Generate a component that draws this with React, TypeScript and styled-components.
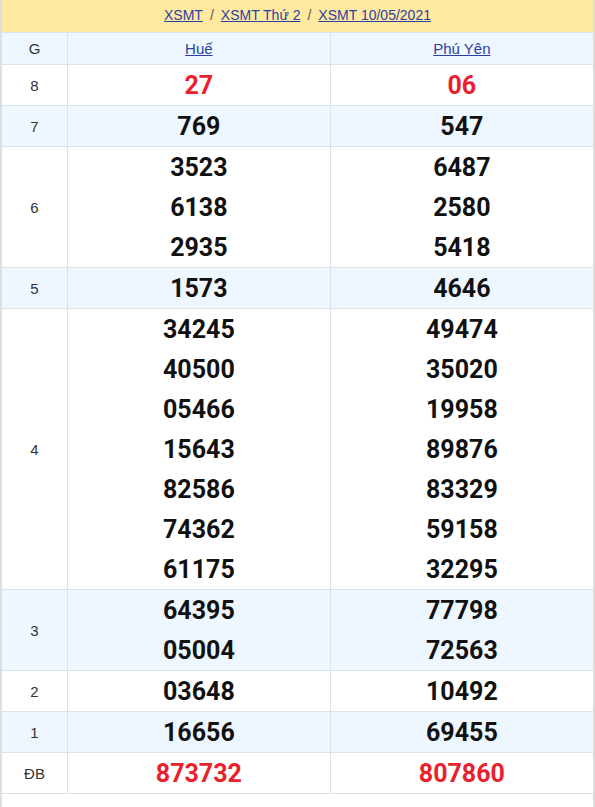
import React from "react";
import styled, { createGlobalStyle } from "styled-components";

const Global = createGlobalStyle`
  html, body { margin: 0; padding: 0; background: #fff; }
  body { font-family: "Liberation Sans", Arial, sans-serif; }
`;

const Wrapper = styled.div`
  width: 595px;
  box-sizing: border-box;
  border-left: 2px solid #dedede;
  border-right: 2px solid #dedede;
  padding-bottom: 14px;
`;

const Crumbs = styled.div`
  height: 32px;
  background: #ffe99f;
  display: flex;
  align-items: center;
  justify-content: center;
  font-size: 14px;
  color: #333;
  padding-bottom: 3px;
  box-sizing: border-box;
`;

const Crumb = styled.a`
  color: #2b3fa5;
  text-decoration: underline;
`;

const Sep = styled.span`
  margin: 0 7px;
  color: #555;
`;

const Table = styled.table`
  width: 100%;
  border-collapse: collapse;
  table-layout: fixed;
  border-bottom: 1px solid #dde2e8;
`;

const Row = styled.tr<{ $alt?: boolean }>`
  background: ${(p) => (p.$alt ? "#eef6ff" : "#ffffff")};
`;

const HeadCell = styled.th<{ $w?: number }>`
  height: 31px;
  padding: 0;
  font-weight: normal;
  font-size: 15px;
  color: #333;
  border: 1px solid #dde2e8;
  border-left: none;
  ${(p) => (p.$w ? `width: ${p.$w}px;` : "")}
  &:last-child { border-right: none; }
`;

const HeadLink = styled.a`
  color: #2b3fa5;
  text-decoration: underline;
`;

const Label = styled.td`
  text-align: center;
  font-size: 15px;
  color: #333;
  padding: 0;
  border: 1px solid #dde2e8;
  border-left: none;
`;

const Cell = styled.td`
  text-align: center;
  padding: 0;
  border: 1px solid #dde2e8;
  &:last-child { border-right: none; }
`;

const Num = styled.div<{ $red?: boolean }>`
  font-family: Roboto, "Liberation Sans", Arial, sans-serif;
  font-weight: 700;
  font-size: 25px;
  line-height: 39px;
  padding-top: 1px;
  color: ${(p) => (p.$red ? "#e8212d" : "#111")};
`;

type Prize = { label: string; hue: string[]; py: string[]; red?: boolean };

const data: Prize[] = [
  { label: "8", hue: ["27"], py: ["06"], red: true },
  { label: "7", hue: ["769"], py: ["547"] },
  { label: "6", hue: ["3523", "6138", "2935"], py: ["6487", "2580", "5418"] },
  { label: "5", hue: ["1573"], py: ["4646"] },
  {
    label: "4",
    hue: ["34245", "40500", "05466", "15643", "82586", "74362", "61175"],
    py: ["49474", "35020", "19958", "89876", "83329", "59158", "32295"],
  },
  { label: "3", hue: ["64395", "05004"], py: ["77798", "72563"] },
  { label: "2", hue: ["03648"], py: ["10492"] },
  { label: "1", hue: ["16656"], py: ["69455"] },
  { label: "ĐB", hue: ["873732"], py: ["807860"], red: true },
];

export default function App() {
  return (
    <>
      <Global />
      <Wrapper>
        <Crumbs>
          <Crumb href="#">XSMT</Crumb>
          <Sep>/</Sep>
          <Crumb href="#">XSMT Thứ 2</Crumb>
          <Sep>/</Sep>
          <Crumb href="#">XSMT 10/05/2021</Crumb>
        </Crumbs>
        <Table>
          <thead>
            <Row $alt>
              <HeadCell $w={65}>G</HeadCell>
              <HeadCell>
                <HeadLink href="#">Huế</HeadLink>
              </HeadCell>
              <HeadCell>
                <HeadLink href="#">Phú Yên</HeadLink>
              </HeadCell>
            </Row>
          </thead>
          <tbody>
            {data.map((p, i) => (
              <Row key={p.label} $alt={i % 2 === 1}>
                <Label>{p.label}</Label>
                <Cell>
                  {p.hue.map((n) => (
                    <Num key={n} $red={p.red}>{n}</Num>
                  ))}
                </Cell>
                <Cell>
                  {p.py.map((n) => (
                    <Num key={n} $red={p.red}>{n}</Num>
                  ))}
                </Cell>
              </Row>
            ))}
          </tbody>
        </Table>
      </Wrapper>
    </>
  );
}
